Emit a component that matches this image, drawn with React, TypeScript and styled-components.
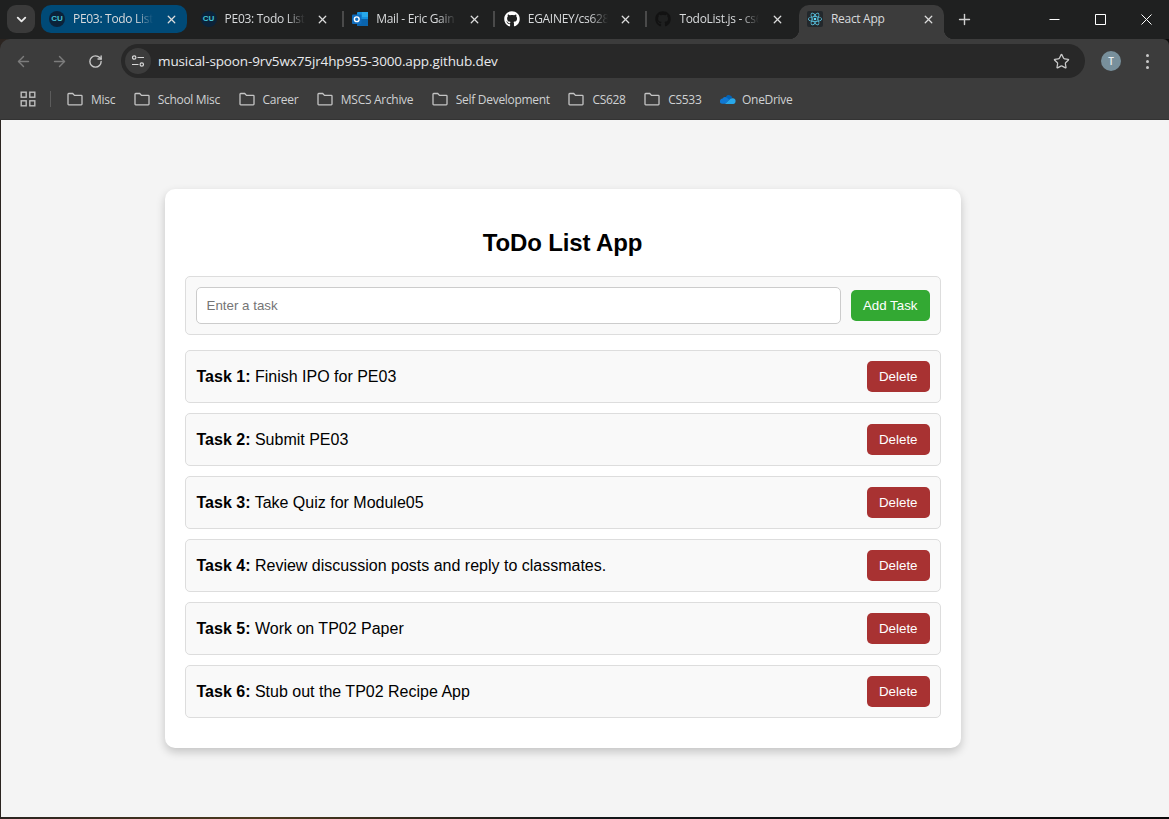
import { useState } from "react";
import styled, { createGlobalStyle } from "styled-components";
import { ArrowLeft, ArrowRight, RotateCw, Star, X, Plus, ChevronDown } from "lucide-react";
import { FaGithub } from "react-icons/fa";
import { SiReact } from "react-icons/si";

const GlobalStyle = createGlobalStyle`
  html, body {
    margin: 0;
    padding: 0;
    height: 100%;
    overflow: hidden;
  }
  * {
    box-sizing: border-box;
  }
`;

const Screen = styled.div`
  width: 1169px;
  height: 819px;
  display: flex;
  flex-direction: column;
  background: linear-gradient(to right, #2b2420, #4c3a1e 22%, #14181a 50%, #0a0a0a);
  overflow: hidden;
  font-family: "Open Sans", "Noto Sans", sans-serif;
`;

const TabStrip = styled.div`
  height: 39px;
  flex: none;
  display: flex;
  align-items: flex-start;
  padding: 5px 0 0 7px;
  background: #1f2020;
`;

const TabMenuButton = styled.div`
  width: 28px;
  height: 28px;
  margin-right: 6px;
  border-radius: 9px;
  background: #3a3a3a;
  color: #e8e8e8;
  display: flex;
  align-items: center;
  justify-content: center;
`;

const Tab = styled.div<{ $state?: "highlighted" | "current" }>`
  position: relative;
  width: 151.6px;
  height: ${(p) => (p.$state === "current" ? "34px" : "28px")};
  flex: none;
  display: flex;
  align-items: center;
  padding-left: 8px;
  padding-bottom: ${(p) => (p.$state === "current" ? "6px" : "0")};
  border-radius: ${(p) => (p.$state === "current" ? "10px 10px 0 0" : "0")};
  background: ${(p) => (p.$state === "current" ? "#3c3c3c" : "transparent")};

  ${(p) =>
    p.$state === "highlighted" &&
    `&::before {
      content: "";
      position: absolute;
      left: 0;
      top: 0;
      width: 146px;
      height: 28px;
      border-radius: 10px;
      background: #004a77;
    }`}

  ${(p) =>
    p.$state === "current" &&
    `width: 145px;
    &::before, &::after {
      content: "";
      position: absolute;
      bottom: 0;
      width: 10px;
      height: 10px;
    }
    &::before {
      left: -10px;
      background: radial-gradient(circle at 0 0, transparent 10px, #3c3c3c 10.5px);
    }
    &::after {
      right: -10px;
      background: radial-gradient(circle at 100% 0, transparent 10px, #3c3c3c 10.5px);
    }`}
`;

const TabDivider = styled.span`
  position: absolute;
  left: 149px;
  top: 6px;
  width: 2px;
  height: 16px;
  background: #4a4a4a;
`;

const Favicon = styled.span`
  position: relative;
  width: 16px;
  height: 16px;
  flex: none;
  display: flex;
  align-items: center;
  justify-content: center;
`;

const CuBadge = styled.span`
  width: 16px;
  height: 16px;
  border-radius: 50%;
  background: #0b2239;
  color: #46c4d6;
  font-family: "Liberation Sans", sans-serif;
  font-size: 8px;
  font-weight: 700;
  line-height: 16px;
  text-align: center;
`;

const ReactBadge = styled.span`
  width: 16px;
  height: 16px;
  border-radius: 2px;
  background: #23282c;
  color: #61dafb;
  display: flex;
  align-items: center;
  justify-content: center;
`;

const TabTitle = styled.span<{ $current?: boolean }>`
  position: relative;
  width: 90px;
  margin-left: 8px;
  flex: none;
  overflow: hidden;
  white-space: nowrap;
  font-size: 12px;
  letter-spacing: -0.3px;
  line-height: 16px;
  color: #d8dadc;
  ${(p) =>
    !p.$current &&
    `-webkit-mask-image: linear-gradient(to right, #000 62px, transparent 80px);
     mask-image: linear-gradient(to right, #000 62px, transparent 80px);`}
`;

const TabClose = styled.span`
  position: relative;
  margin-left: 1px;
  width: 14px;
  height: 14px;
  flex: none;
  display: flex;
  align-items: center;
  justify-content: center;
  color: #dcdcdc;
`;

const NewTab = styled.div`
  width: 20px;
  height: 28px;
  margin-left: 11px;
  color: #d0d0d0;
  display: flex;
  align-items: center;
  justify-content: center;
`;

const WindowControls = styled.div`
  margin-left: auto;
  display: flex;
  margin-top: -5px;
  color: #fff;
`;

const WindowButton = styled.div`
  width: 46px;
  height: 38px;
  display: flex;
  align-items: center;
  justify-content: center;
`;

const Toolbar = styled.div`
  height: 44px;
  flex: none;
  display: flex;
  align-items: center;
  padding: 0 12px 0 14px;
  background: #3c3c3c;
  border-radius: 10px 6px 0 0;
`;

const NavButton = styled.div<{ $dim?: boolean }>`
  width: 18px;
  height: 18px;
  margin-right: 18px;
  display: flex;
  align-items: center;
  justify-content: center;
  color: ${(p) => (p.$dim ? "#7c7c7c" : "#c9c9c9")};
`;

const AddressBar = styled.div`
  width: 964px;
  height: 34px;
  margin-left: -1px;
  border-radius: 17px;
  background: #282828;
  display: flex;
  align-items: center;
  padding: 0 15px 0 4px;
`;

const SiteInfo = styled.div`
  width: 26px;
  height: 26px;
  border-radius: 50%;
  background: #3c3c3c;
  display: flex;
  align-items: center;
  justify-content: center;
  color: #d8d8d8;
  flex: none;
`;

const Url = styled.div`
  margin-left: 7px;
  font-size: 13.5px;
  letter-spacing: -0.12px;
  color: #e8eaed;
  white-space: nowrap;
`;

const StarButton = styled.div`
  margin-left: auto;
  color: #c9c9c9;
  display: flex;
`;

const Avatar = styled.div`
  width: 20px;
  height: 20px;
  margin-left: 16px;
  border-radius: 50%;
  background: #78909c;
  color: #e8eef1;
  font-size: 10px;
  font-weight: 600;
  line-height: 20px;
  text-align: center;
  flex: none;
`;

const Kebab = styled.div`
  margin-left: 25px;
  display: flex;
  flex-direction: column;
  gap: 3px;

  span {
    width: 3px;
    height: 3px;
    border-radius: 50%;
    background: #c9c9c9;
  }
`;

const BookmarksBar = styled.div`
  height: 37px;
  flex: none;
  display: flex;
  align-items: center;
  padding: 0 0 4px 20px;
  background: #3c3c3c;
  border-bottom: 1px solid #333;
`;

const BarDivider = styled.span`
  width: 1px;
  height: 16px;
  margin: 0 16px 0 14px;
  background: #5c5c5c;
`;

const Bookmark = styled.div<{ $gap?: number }>`
  display: flex;
  align-items: center;
  gap: ${(p) => p.$gap ?? 8}px;
  margin-right: 18.6px;
  font-size: 12px;
  letter-spacing: -0.3px;
  color: #cfd1d3;
  white-space: nowrap;

  svg {
    flex: none;
  }
`;

const Page = styled.main`
  flex: 1;
  min-height: 0;
  margin: 0 0 2px 1px;
  background: #f4f4f4;
  display: flex;
  justify-content: center;
  align-items: flex-start;
  padding: 69px 45px 0 0;
  font-family: "Liberation Sans", Arial, sans-serif;
`;

const Card = styled.section`
  width: 796px;
  padding: 20px 20px 30px;
  background: #fff;
  border-radius: 10px;
  box-shadow: 0 4px 10px rgba(0, 0, 0, 0.2);
`;

const Title = styled.h1`
  margin: 20px 0;
  font-size: 24px;
  letter-spacing: -0.15px;
  line-height: 27px;
  font-weight: 700;
  text-align: center;
  color: #000;
`;

const TaskForm = styled.form`
  display: flex;
  align-items: center;
  gap: 10px;
  padding: 10px;
  margin-bottom: 15px;
  background: #f9f9f9;
  border: 1px solid #ddd;
  border-radius: 5px;
`;

const TaskInput = styled.input`
  flex: 1;
  height: 37px;
  padding: 10px;
  font-family: inherit;
  font-size: 13.33px;
  background: #fff;
  border: 1px solid #ccc;
  border-radius: 5px;
  outline: none;

  &::placeholder {
    color: #757575;
  }
`;

const ActionButton = styled.button<{ $kind: "add" | "delete" }>`
  height: 31px;
  padding: 0 12px;
  border: none;
  border-radius: 5px;
  font-family: inherit;
  font-size: 13.33px;
  color: #fff;
  background: ${(p) => (p.$kind === "add" ? "#33a933" : "#a83232")};
`;

const TaskList = styled.ul`
  list-style: none;
  margin: 0;
  padding: 0;
  display: flex;
  flex-direction: column;
  gap: 10px;
`;

const TaskRow = styled.li`
  display: flex;
  align-items: center;
  justify-content: space-between;
  padding: 10px;
  background: #f9f9f9;
  border: 1px solid #ddd;
  border-radius: 5px;
  font-size: 16px;
  color: #000;
`;

const TaskText = styled.span`
  margin-left: 1px;
`;

const FolderIcon = () => (
  <svg width="16" height="16" viewBox="0 0 16 16" fill="none" stroke="#c4c4c4" strokeWidth="1.3">
    <path d="M1 3.2c0-.4.3-.7.7-.7h4l1.8 1.9h6.8c.4 0 .7.3.7.7v8c0 .4-.3.7-.7.7H1.7c-.4 0-.7-.3-.7-.7z" />
  </svg>
);

const AppsIcon = () => (
  <svg width="16" height="16" viewBox="0 0 16 16" fill="none" stroke="#bdbdbd" strokeWidth="1.4">
    <rect x="1.2" y="1.2" width="5" height="5" />
    <rect x="9.8" y="1.2" width="5" height="5" />
    <rect x="1.2" y="9.8" width="5" height="5" />
    <rect x="9.8" y="9.8" width="5" height="5" />
  </svg>
);

const TuneIcon = () => (
  <svg width="14" height="14" viewBox="0 0 14 14" fill="none" stroke="currentColor" strokeWidth="1.2">
    <circle cx="3.2" cy="3.5" r="1.7" />
    <path d="M6.5 3.5h6.5M1 10.5h6.5" />
    <circle cx="10.8" cy="10.5" r="1.7" />
  </svg>
);

const OutlookIcon = () => (
  <svg width="16" height="16" viewBox="0 0 16 16">
    <rect x="5" y="1" width="11" height="14" rx="1" fill="#1490df" />
    <rect x="10" y="1" width="6" height="5" fill="#28a8ea" />
    <path d="M5 8h11v6a1 1 0 0 1-1 1H5z" fill="#0a64ad" />
    <rect x="0" y="3.5" width="9.5" height="9.5" rx="1" fill="#0f6cbd" />
    <circle cx="4.75" cy="8.25" r="2.4" fill="none" stroke="#fff" strokeWidth="1.4" />
  </svg>
);

const OneDriveIcon = () => (
  <svg width="16" height="16" viewBox="0 0 16 16">
    <path d="M6 5.5a3.6 3.6 0 0 1 6.3 1.3L9 9 6 7.5z" fill="#0364b8" />
    <path d="M1 12.5A2.7 2.7 0 0 1 2.6 7.6 3.3 3.3 0 0 1 6 6.2l3.5 2.6-4 4H2.4z" fill="#0f78d4" />
    <path d="M5 13l5.2-5a3 3 0 0 1 2.6-.8 2.8 2.8 0 0 1 2.7 3.5 2.3 2.3 0 0 1-2 2.3z" fill="#28a8ea" />
  </svg>
);

const CaptionIcon = ({ d }: { d: string }) => (
  <svg width="11" height="11" viewBox="0 0 11 11" fill="none" stroke="currentColor" strokeWidth="1">
    <path d={d} />
  </svg>
);

const browserTabs = [
  { title: "PE03: Todo List", icon: <CuBadge>CU</CuBadge>, state: "highlighted" as const },
  { title: "PE03: Todo List", icon: <CuBadge>CU</CuBadge>, divider: true },
  { title: "Mail - Eric Gain", icon: <OutlookIcon />, divider: true },
  { title: "EGAINEY/cs628", icon: <FaGithub size={16} color="#fff" />, divider: true },
  { title: "TodoList.js - cs6", icon: <FaGithub size={16} color="#121212" /> },
];

const bookmarks = ["Misc", "School Misc", "Career", "MSCS Archive", "Self Development", "CS628", "CS533"];

const initialTasks = [
  "Finish IPO for PE03",
  "Submit PE03",
  "Take Quiz for Module05",
  "Review discussion posts and reply to classmates.",
  "Work on TP02 Paper",
  "Stub out the TP02 Recipe App",
];

function App() {
  const [tasks, setTasks] = useState(initialTasks);
  const [draft, setDraft] = useState("");

  const addTask = (e: React.FormEvent) => {
    e.preventDefault();
    if (!draft.trim()) return;
    setTasks([...tasks, draft]);
    setDraft("");
  };

  return (
    <Screen>
      <GlobalStyle />
      <TabStrip>
        <TabMenuButton>
          <ChevronDown size={15} strokeWidth={3} />
        </TabMenuButton>
        {browserTabs.map((tab) => (
          <Tab key={tab.title + tab.state} $state={tab.state}>
            <Favicon>{tab.icon}</Favicon>
            <TabTitle>{tab.title}</TabTitle>
            <TabClose>
              <X size={13} strokeWidth={2.4} />
            </TabClose>
            {tab.divider && <TabDivider />}
          </Tab>
        ))}
        <Tab $state="current">
          <Favicon>
            <ReactBadge>
              <SiReact size={14} />
            </ReactBadge>
          </Favicon>
          <TabTitle $current>React App</TabTitle>
          <TabClose>
            <X size={13} strokeWidth={2.4} />
          </TabClose>
        </Tab>
        <NewTab>
          <Plus size={17} strokeWidth={2} />
        </NewTab>
        <WindowControls>
          <WindowButton>
            <CaptionIcon d="M0.5 5.5h10" />
          </WindowButton>
          <WindowButton>
            <CaptionIcon d="M0.5 0.5h10v10h-10z" />
          </WindowButton>
          <WindowButton>
            <CaptionIcon d="M0.5 0.5l10 10M10.5 0.5l-10 10" />
          </WindowButton>
        </WindowControls>
      </TabStrip>

      <Toolbar>
        <NavButton $dim>
          <ArrowLeft size={17} />
        </NavButton>
        <NavButton $dim>
          <ArrowRight size={17} />
        </NavButton>
        <NavButton>
          <RotateCw size={15} strokeWidth={2.2} />
        </NavButton>
        <AddressBar>
          <SiteInfo>
            <TuneIcon />
          </SiteInfo>
          <Url>musical-spoon-9rv5wx75jr4hp955-3000.app.github.dev</Url>
          <StarButton>
            <Star size={17} strokeWidth={1.8} />
          </StarButton>
        </AddressBar>
        <Avatar>T</Avatar>
        <Kebab>
          <span />
          <span />
          <span />
        </Kebab>
      </Toolbar>

      <BookmarksBar>
        <AppsIcon />
        <BarDivider />
        {bookmarks.map((name) => (
          <Bookmark key={name}>
            <FolderIcon />
            {name}
          </Bookmark>
        ))}
        <Bookmark $gap={6}>
          <OneDriveIcon />
          OneDrive
        </Bookmark>
      </BookmarksBar>

      <Page>
        <Card>
          <Title>ToDo List App</Title>
          <TaskForm onSubmit={addTask}>
            <TaskInput placeholder="Enter a task" value={draft} onChange={(e) => setDraft(e.target.value)} />
            <ActionButton $kind="add" type="submit">
              Add Task
            </ActionButton>
          </TaskForm>
          <TaskList>
            {tasks.map((task, i) => (
              <TaskRow key={task + i}>
                <TaskText>
                  <strong>Task {i + 1}:</strong> {task}
                </TaskText>
                <ActionButton $kind="delete" type="button" onClick={() => setTasks(tasks.filter((_, idx) => idx !== i))}>
                  Delete
                </ActionButton>
              </TaskRow>
            ))}
          </TaskList>
        </Card>
      </Page>
    </Screen>
  );
}

export default App;
